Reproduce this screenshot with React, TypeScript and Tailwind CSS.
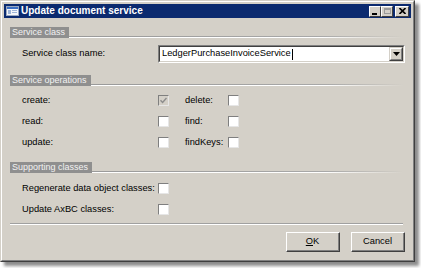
const FONT = "font-['Liberation_Sans',Arial,sans-serif]";

function Check({ checked = false, disabled = false }: { checked?: boolean; disabled?: boolean }) {
  return (
    <div
      className={`w-[11px] h-[11px] shrink-0 flex items-center justify-center border border-t-[#7f7f7f] border-l-[#7f7f7f] border-b-[#e6e6e6] border-r-[#e6e6e6] ${
        disabled ? "bg-[#d4d0c8]" : "bg-white"
      }`}
    >
      {checked && (
        <svg width="7" height="7" viewBox="0 0 7 7">
          <path d="M0.5 3.2 L2.6 5.4 L6.5 1" fill="none" stroke="#8c8c8c" strokeWidth="1.4" />
        </svg>
      )}
    </div>
  );
}

function GroupHeader({ title }: { title: string }) {
  return (
    <div className="flex items-end h-[11px]">
      <div className="h-[11px] bg-[#8f8f8f] text-[#f2f2f2] text-[9px] leading-[11px] pl-[2px] pr-[4px] whitespace-nowrap">
        {title}
      </div>
      <div className="flex-1 flex flex-col mr-[4px]">
        <div className="h-[1px] bg-linear-to-r from-[#9a9a9a] via-[#a8a8a8] via-75% to-[#d4d0c8]" />
        <div className="h-[1px] bg-linear-to-r from-white via-white via-75% to-[#d4d0c8]" />
      </div>
    </div>
  );
}

function TitleButton({ children, wide = false }: { children: React.ReactNode; wide?: boolean }) {
  return (
    <div
      className={`${wide ? "w-[14px]" : "w-[12px]"} h-[11px] bg-[#d4d0c8] border border-t-white border-l-white border-b-[#404040] border-r-[#404040] flex items-center justify-center`}
    >
      {children}
    </div>
  );
}

function Button({ children }: { children: React.ReactNode }) {
  return (
    <div className="w-[54px] h-[20px] border border-t-white border-l-white border-b-[#404040] border-r-[#404040]">
      <div className="h-full border-b border-r border-b-[#808080] border-r-[#808080] flex items-center justify-center text-[9.3px] text-black">
        {children}
      </div>
    </div>
  );
}

function OpRow({
  label,
  checked,
  disabled,
  label2,
}: {
  label: string;
  checked?: boolean;
  disabled?: boolean;
  label2: string;
}) {
  return (
    <div className="flex items-center h-[21px] pl-[12px]">
      <div className="w-[136px]">{label}</div>
      <Check checked={checked} disabled={disabled} />
      <div className="w-[43px] ml-[16px]">{label2}</div>
      <Check />
    </div>
  );
}

export default function App() {
  return (
    <div className={`w-[421px] h-[268px] bg-white ${FONT}`}>
      <div className="w-[415px] h-[262px] border border-t-[#d4d0c8] border-l-[#d4d0c8] border-b-[#404040] border-r-[#404040] shadow-[4px_4px_3px_rgba(0,0,0,0.45)]">
        <div className="h-full border border-t-white border-l-white border-b-[#808080] border-r-[#808080] bg-[#d4d0c8] p-[2px] flex flex-col">
          {/* title bar */}
          <div className="h-[14px] bg-[#0b2a6f] flex items-center pl-[2px] pr-[2px]">
            <svg width="13" height="10" viewBox="0 0 13 10" className="shrink-0">
              <rect x="0.5" y="0.5" width="12" height="9" fill="#f4f6fa" stroke="#9aa8c0" />
              <rect x="1" y="1" width="11" height="2" fill="#3b6fc4" />
              <rect x="2" y="4" width="3" height="4" fill="#9db4d8" />
              <rect x="6" y="4" width="5" height="1" fill="#9db4d8" />
              <rect x="6" y="6" width="5" height="1" fill="#9db4d8" />
            </svg>
            <div className="ml-[2px] text-white font-bold text-[10px] leading-[14px]">Update document service</div>
            <div className="flex-1" />
            <div className="flex items-center">
              <TitleButton>
                <div className="w-[5px] h-[2px] bg-black mt-[5px] -ml-[1px]" />
              </TitleButton>
              <TitleButton>
                <div className="w-[7px] h-[6px] border border-t-2 border-[#9a9a9a]" />
              </TitleButton>
              <div className="w-[2px]" />
              <TitleButton wide>
                <svg width="7" height="6" viewBox="0 0 7 6">
                  <path d="M0.5 0 L6.5 6 M6.5 0 L0.5 6" stroke="black" strokeWidth="1.6" />
                </svg>
              </TitleButton>
            </div>
          </div>

          {/* body */}
          <div className="flex-1 flex flex-col pl-[6px] pr-[4px] text-[9.3px] text-black">
            <div className="mt-[9px]">
              <GroupHeader title="Service class" />
            </div>
            <div className="mt-[7px] flex items-center h-[18px] pl-[12px]">
              <div className="w-[136px]">Service class name:</div>
              <div className="w-[247px] h-[18px] border border-t-[#808080] border-l-[#808080] border-b-white border-r-white">
                <div className="h-full border border-t-[#404040] border-l-[#404040] border-b-[#d4d0c8] border-r-[#d4d0c8] bg-white flex items-center">
                  <div className="flex-1 pl-[2px] leading-none flex items-center">
                    LedgerPurchaseInvoiceService
                    <span className="inline-block w-[1px] h-[11px] bg-black ml-[1px]" />
                  </div>
                  <div className="w-[14px] h-full border border-t-[#d4d0c8] border-l-[#d4d0c8] border-b-[#404040] border-r-[#404040]">
                    <div className="h-full bg-[#d4d0c8] border border-t-white border-l-white border-b-[#808080] border-r-[#808080] flex items-center justify-center">
                      <svg width="7" height="4" viewBox="0 0 7 4">
                        <path d="M0 0 H7 L3.5 4 Z" fill="black" />
                      </svg>
                    </div>
                  </div>
                </div>
              </div>
            </div>

            <div className="mt-[12px]">
              <GroupHeader title="Service operations" />
            </div>
            <div className="mt-[4px] flex flex-col">
              <OpRow label="create:" checked disabled label2="delete:" />
              <OpRow label="read:" label2="find:" />
              <OpRow label="update:" label2="findKeys:" />
            </div>

            <div className="mt-[9px]">
              <GroupHeader title="Supporting classes" />
            </div>
            <div className="mt-[5px] flex flex-col">
              <div className="flex items-center h-[21px] pl-[12px]">
                <div className="w-[136px]">Regenerate data object classes:</div>
                <Check />
              </div>
              <div className="flex items-center h-[21px] pl-[12px]">
                <div className="w-[136px]">Update AxBC classes:</div>
                <Check />
              </div>
            </div>

            <div className="mt-[3px] mr-[4px] flex flex-col">
              <div className="h-[1px] bg-[#a0a0a0]" />
              <div className="h-[1px] bg-white" />
            </div>

            <div className="mt-[7px] flex justify-end gap-[11px] pr-[2px]">
              <Button>
                <span>
                  <span className="underline">O</span>K
                </span>
              </Button>
              <Button>Cancel</Button>
            </div>
          </div>
        </div>
      </div>
    </div>
  );
}
